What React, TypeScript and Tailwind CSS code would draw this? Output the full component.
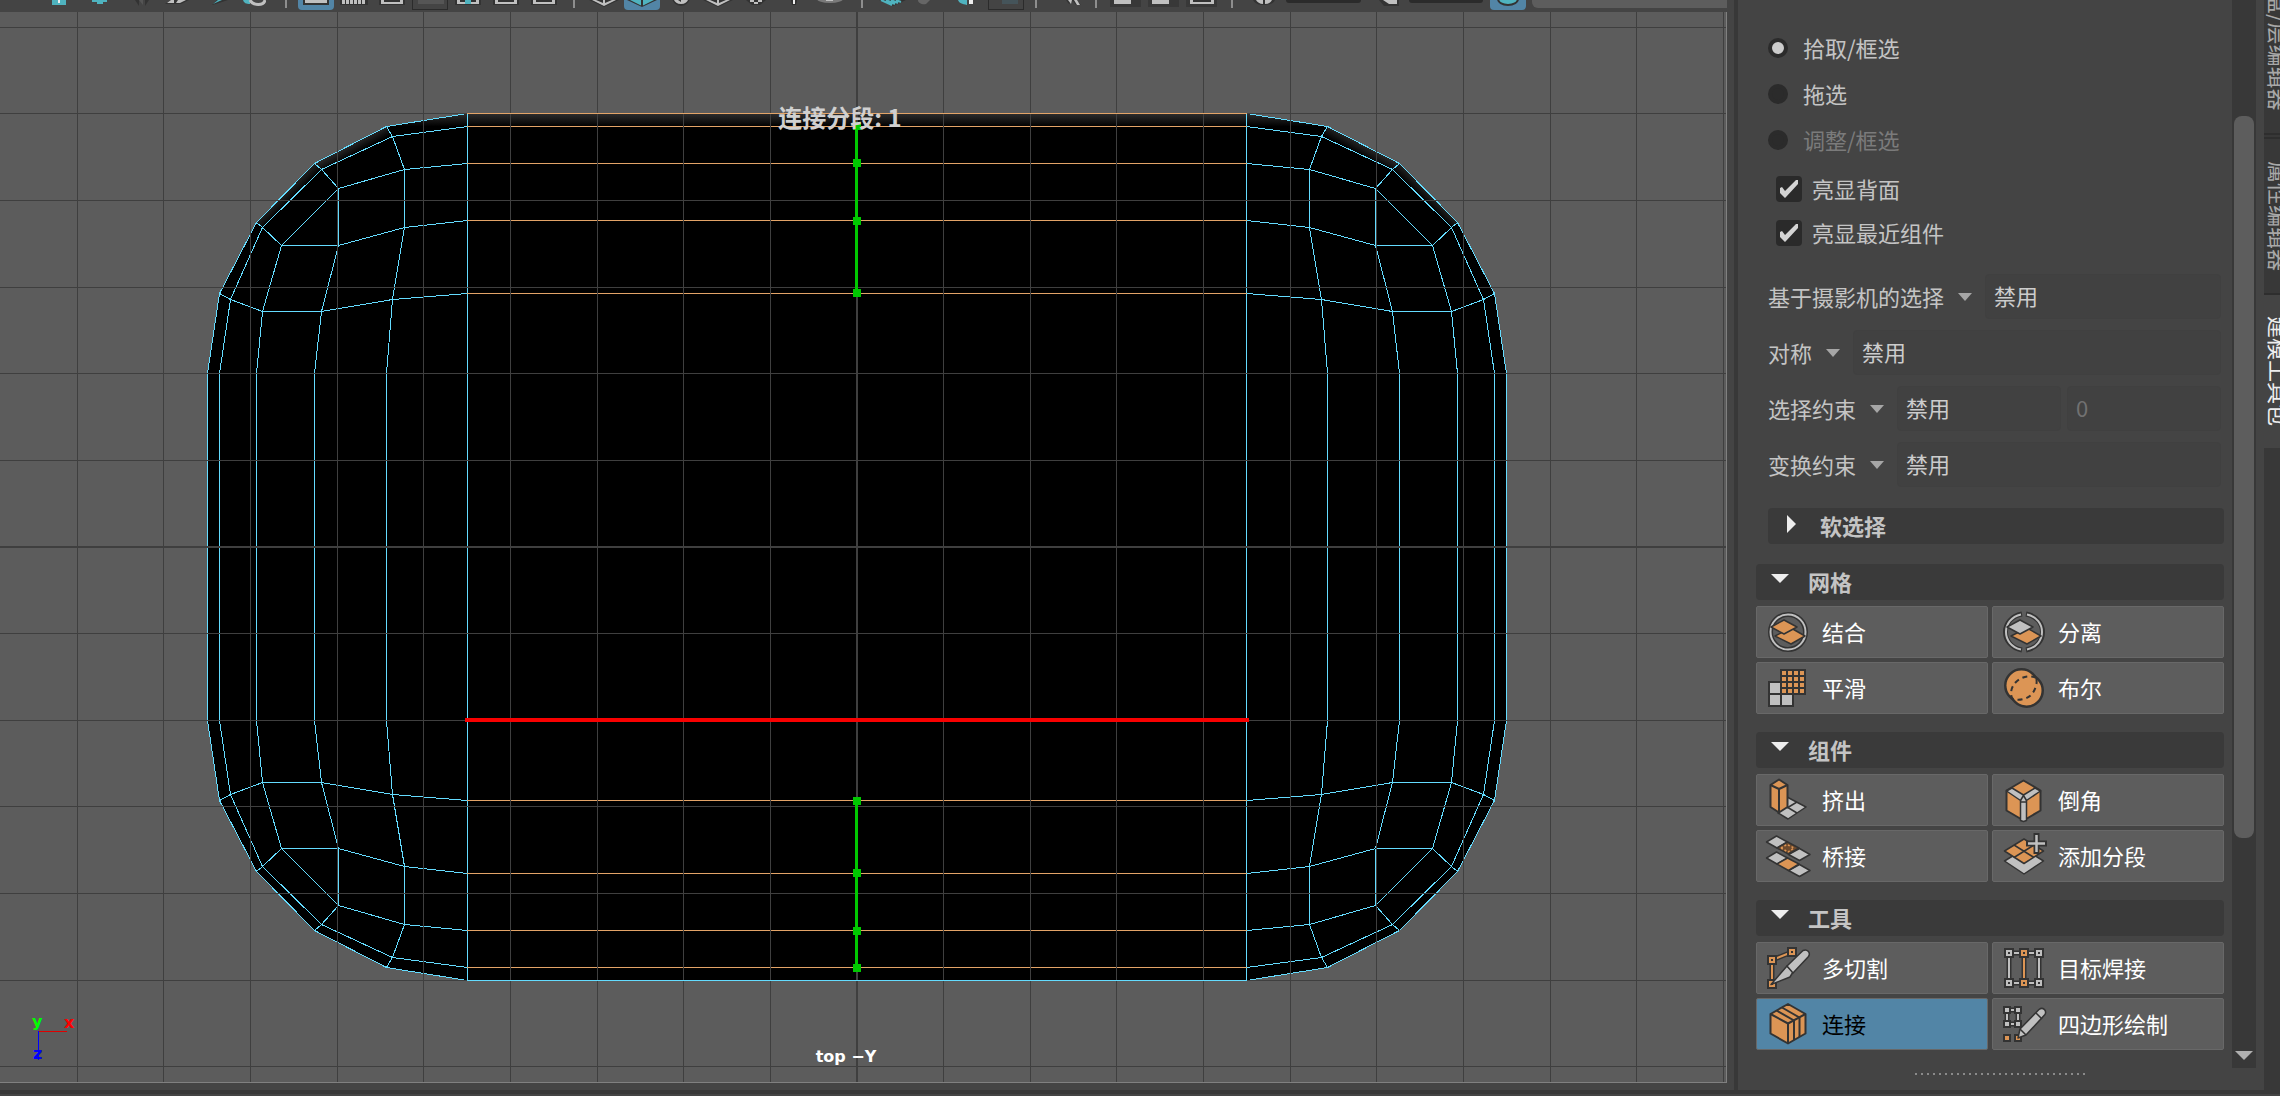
import type { ReactNode } from 'react';

type Point = [number, number];

const DARK = '#333333';
const ORANGE = '#dc9555';
const SILVER = '#c0c0c0';
const TEAL = '#4fb3bf';
const CYAN = '#64dcff';
const EDGE = '#e3a468';

/* ---------- mesh ---------- */

// One quarter of the rounded box, the other three are mirrored from it
const SPAN: Point = [1713, 1093];

const rings: Point[][] = [
  [[857, 113], [467, 113], [386, 126], [314, 163], [256, 222], [219, 293], [207, 373], [207, 547]],
  [[467, 126], [392, 136], [321, 169], [262, 227], [230, 299], [219, 373], [219, 547]],
  [[467, 163], [404, 169], [338, 188], [281, 245], [262, 311], [256, 373], [256, 547]],
  [[467, 220], [404, 227], [338, 245], [321, 311], [314, 373], [314, 547]],
  [[467, 293], [392, 299], [386, 373], [386, 547]],
];

const spokes: Point[][] = [
  [[467, 113], [467, 547]],
  [[386, 126], [392, 136], [404, 169], [404, 227], [392, 299]],
  [[314, 163], [321, 169], [338, 188], [338, 245]],
  [[256, 222], [262, 227], [281, 245], [338, 245]],
  [[219, 293], [230, 299], [262, 311], [321, 311], [392, 299]],
];

const mirrors: Point[] = [[1, 1], [-1, 1], [1, -1], [-1, -1]];

const reflect = (points: Point[], [sx, sy]: Point) =>
  points
    .map(([x, y]) => [sx === 1 ? x : SPAN[0] - x, sy === 1 ? y : SPAN[1] - y].join(','))
    .join(' ');

const gridX = [77, 163, 250, 337, 423, 510, 597, 683, 770, 943, 1030, 1116, 1203, 1290, 1376, 1463, 1550, 1636, 1723];
const gridY = [27, 113, 200, 287, 373, 460, 633, 720, 806, 893, 980, 1066];
const edgesY = [126, 163, 220, 293, 800, 873, 930, 967];
const nodesY = [126, 163, 221, 293, 801, 873, 931, 968];

function Viewport() {
  return (
    <svg
      viewBox="0 12 1726 1070"
      preserveAspectRatio="xMidYMid slice"
      className="block h-full w-full"
      shapeRendering="crispEdges"
      role="img"
      aria-label="top -Y"
    >
      <defs>
        <linearGradient id="rim" gradientUnits="userSpaceOnUse" x1="0" y1="113" x2="0" y2="126">
          <stop offset="0" stopColor="#2e2e2e" />
          <stop offset="1" stopColor="#000" />
        </linearGradient>
        <linearGradient id="rimSlope" gradientUnits="userSpaceOnUse" x1="347" y1="144" x2="353" y2="155">
          <stop offset="0" stopColor="#2e2e2e" />
          <stop offset="1" stopColor="#000" />
        </linearGradient>
        <linearGradient id="rimCorner" gradientUnits="userSpaceOnUse" x1="285" y1="192" x2="292" y2="199">
          <stop offset="0" stopColor="#222" />
          <stop offset="1" stopColor="#000" />
        </linearGradient>
      </defs>

      {/* half a pixel keeps the one pixel strokes sharp */}
      <g transform="translate(0.5 0.5)">
        {mirrors.map((m) => (
          <polygon key={m.join()} points={reflect([...rings[0], [857, 547]], m)} fill="#000" />
        ))}
        {[undefined, 'translate(1713 0) scale(-1 1)'].map((transform) => (
          <g key={transform ?? 'left'} transform={transform}>
            <polygon points="857,113 467,113 386,126 392,136 467,126 857,126" fill="url(#rim)" />
            <polygon points="386,126 314,163 321,169 392,136" fill="url(#rimSlope)" />
            <polygon points="314,163 256,222 262,227 321,169" fill="url(#rimCorner)" />
          </g>
        ))}
        <g fill="none" stroke={CYAN} strokeWidth="1">
          {mirrors.map((m) =>
            [...rings, ...spokes].map((line, i) => (
              <polyline key={`${m.join()}-${i}`} points={reflect(line, m)} />
            )),
          )}
        </g>
      </g>
      {edgesY.map((y) => (
        <rect key={y} x="467" y={y} width="780" height="1" fill={EDGE} />
      ))}

      <g fill="#3f3f3f">
        {gridX.map((x) => (
          <rect key={x} x={x} y="12" width="1" height="1070" />
        ))}
        {gridY.map((y) => (
          <rect key={y} x="0" y={y} width="1726" height="1" />
        ))}
        <rect x="856" y="12" width="2" height="1070" />
        <rect x="0" y="546" width="1726" height="2" />
      </g>
      <rect x="467" y="113" width="780" height="1" fill={EDGE} />
      <rect x="467" y="980" width="780" height="1" fill={CYAN} />

      {/* connect preview */}
      <rect x="465" y="718" width="784" height="4" fill="#f80000" />
      <g fill="#00c800">
        <rect x="855" y="126" width="3" height="167" />
        <rect x="855" y="801" width="3" height="167" />
        {nodesY.map((y) => (
          <rect key={y} x="853" y={y - 4} width="8" height="8" />
        ))}
      </g>

      <text
        x="840"
        y="127"
        textAnchor="middle"
        fill="#d0d0d0"
        className="font-['Noto_Sans_CJK_SC',sans-serif] text-[24px] font-bold"
      >
        连接分段: 1
      </text>
      <text
        x="846"
        y="1062"
        textAnchor="middle"
        fill="#ffffff"
        className="font-['DejaVu_Sans',sans-serif] text-[16px] font-bold"
      >
        top −Y
      </text>

      {/* axis gizmo */}
      <g className="font-['DejaVu_Sans',sans-serif] text-[16px] font-bold">
        <rect x="39" y="1031" width="28" height="1" fill="#e00000" />
        <rect x="38" y="1031" width="1" height="29" fill="#0000ff" />
        <text x="32" y="1027" fill="#00ff00">y</text>
        <text x="64" y="1028" fill="#ff0000">x</text>
        <text x="33" y="1059" fill="#0000ff">z</text>
      </g>
    </svg>
  );
}

/* ---------- toolbar ---------- */

function Slot({ label, active, framed, children }: { label: string; active?: boolean; framed?: boolean; children: ReactNode }) {
  return (
    <button
      type="button"
      aria-label={label}
      className={`h-[10px] w-9 flex-none overflow-hidden ${active ? 'rounded-b-sm bg-[#5285a6]' : ''} ${
        framed ? 'border border-t-0 border-[#2b2b2b]' : ''
      }`}
    >
      <svg viewBox="0 0 36 10" className="mx-auto block h-[10px] w-9">{children}</svg>
    </button>
  );
}

const Group = ({ children }: { children: ReactNode }) => <div className="flex flex-none gap-0.5">{children}</div>;

const Divider = () => <div className="mx-[11px] h-2 w-0.5 flex-none bg-[#8e8e8e]" />;

const Gate = ({ children }: { children?: ReactNode }) => (
  <>
    <path d="M5 0h26v5H5z" fill={DARK} />
    <path d="M7 0h22v4H7z" fill={SILVER} />
    <path d="M10 0h16v2H10z" fill={DARK} />
    {children}
  </>
);

const CubeTip = ({ fill }: { fill: string }) => (
  <>
    <path d="M3 0l15 7 15-7z" fill={DARK} />
    <path d="M6 0l12 6L30 0z" fill={fill} />
    {fill === SILVER && <path d="M10 0l7 3V0zM26 0l-7 3V0z" fill={DARK} />}
    {fill !== SILVER && <path d="M17 0h2v6h-2z" fill={DARK} />}
  </>
);

function Toolbar() {
  return (
    <div className="flex h-3 items-start overflow-hidden bg-[#444444] pl-10">
      <Group>
        <Slot label="选择摄影机">
          <path d="M12 0h14v5H12z" fill={TEAL} />
          <path d="M18 0h2v3h-2z" fill="#eee" />
        </Slot>
        <Slot label="锁定摄影机"><path d="M14 0h15v2h-4v2h-6V2h-5z" fill={TEAL} /></Slot>
        <Slot label="摄影机属性">
          <path d="M19 0h4v6zM33 0h-4v6z" fill={DARK} />
          <path d="M23 0l4 5V0z" fill="#555" />
        </Slot>
        <Slot label="书签">
          <path d="M11 4l6-4h18l-8 4z" fill={DARK} />
          <path d="M13 3l4-3h3v3zM22 3h4l6-3h-8z" fill={SILVER} />
        </Slot>
        <Slot label="图像平面">
          <path d="M20 5l5-5h11l-9 3z" fill={DARK} />
          <path d="M21 4l5-4h4z" fill={TEAL} />
        </Slot>
        <Slot label="平移/缩放">
          <path d="M13 0h7v4c-4 0-6-1-7-4z" fill={TEAL} />
          <path d="M20 0c3 6 14 6 15 0" fill="none" stroke={SILVER} strokeWidth="3" />
        </Slot>
      </Group>
      <div className="w-2 flex-none" />
      <Divider />
      <Group>
        <Slot label="栅格" active>
          <path d="M5 0h26v5H5z" fill={DARK} />
          <path d="M7 0h22v3H7z" fill={SILVER} />
        </Slot>
        <Slot label="胶片门">
          <path d="M4 0h28v5H4z" fill={DARK} />
          <path d="M6 0h3v4H6zM10 0h3v4h-3zM14 0h3v4h-3zM18 0h3v4h-3zM22 0h3v4h-3zM26 0h3v4h-3z" fill={SILVER} />
        </Slot>
        <Slot label="分辨率门"><Gate /></Slot>
        <Slot label="门遮罩" framed><path d="M5 0h26v4H5z" fill="#555" /></Slot>
        <Slot label="区域图"><Gate><path d="M15 0h6v4h-6z" fill={TEAL} /></Gate></Slot>
        <Slot label="安全动作"><Gate /></Slot>
        <Slot label="安全标题"><Gate /></Slot>
      </Group>
      <Divider />
      <Group>
        <Slot label="线框"><CubeTip fill={SILVER} /></Slot>
        <Slot label="着色" active><CubeTip fill={TEAL} /></Slot>
        <Slot label="默认材质">
          <circle cx="19" cy="-3" r="9" fill={DARK} />
          <path d="M12 0c1 2 3 4 7 4s6-2 7-4h-7v2l-3-2z" fill={SILVER} />
        </Slot>
        <Slot label="着色线框"><CubeTip fill={SILVER} /></Slot>
        <Slot label="带纹理">
          <path d="M8 0h20l-6 5h-8z" fill={DARK} />
          <path d="M12 0h4v2h-4zM16 2h4v2h-4zM20 0h4v2h-4z" fill={SILVER} />
        </Slot>
        <Slot label="灯光"><path d="M15 0h6l-1 5h-4z" fill="#2f2f2f" /><path d="M17 0h2v4h-2z" fill="#eee" /></Slot>
        <Slot label="阴影"><ellipse cx="16" cy="-1" rx="13" ry="4" fill="#7a7a7a" /><path d="M12 0h7v1h-7z" fill={SILVER} /></Slot>
      </Group>
      <Divider />
      <Group>
        <Slot label="隔离选择">
          <path d="M5 0h27l-13 6z" fill={DARK} />
          <path d="M7 0l11 5M12 0l9 4M17 0l7 3M22 0l5 2" stroke={TEAL} strokeWidth="2" />
        </Slot>
        <Slot label="运动模糊"><path d="M6 0h12l-4 4C10 5 6 3 6 0z" fill="#666" /></Slot>
        <Slot label="多采样">
          <path d="M8 0h9v5C12 4 9 3 8 0z" fill={TEAL} />
          <path d="M19 0h4v4h-4z" fill="#eee" />
        </Slot>
        <Slot label="景深" framed><path d="M13 0h16v4H13z" fill="#45545a" /></Slot>
      </Group>
      <Divider />
      <Slot label="X 射线">
        <path d="M18 0h9l6 5h-5l-3-4-4 3z" fill={DARK} />
        <path d="M20 0l3 4 1-4zM26 0l3 5h3l-3-5z" fill={SILVER} />
      </Slot>
      <Divider />
      <Group>
        <Slot label="视图一"><path d="M2 0h31v7H2z" fill="#383838" /><path d="M6 0h17v4H6z" fill={SILVER} /></Slot>
        <Slot label="视图二"><path d="M2 0h31v7H2z" fill="#383838" /><path d="M6 0h17v4H6z" fill={SILVER} /></Slot>
        <Slot label="视图三">
          <path d="M2 0h31v7H2z" fill="#383838" />
          <path d="M6 0h24v4H6z" fill={SILVER} />
          <path d="M9 0h18v2H9z" fill={DARK} />
        </Slot>
      </Group>
      <Divider />
      <Slot label="曝光">
        <path d="M9 0h22c-2 4-6 5-11 5S11 4 9 0z" fill={DARK} />
        <path d="M12 0h7v4c-3 0-6-2-7-4zM21 0h7c-1 2-3 4-7 4z" fill={SILVER} />
      </Slot>
      <div className="mr-2.5 ml-1.5 h-[3px] w-[75px] flex-none rounded-b-sm bg-[#2b2b2b]" />
      <Slot label="伽马">
        <path d="M8 0h20v6H13z" fill={DARK} />
        <path d="M12 0h14v4h-8z" fill={SILVER} />
      </Slot>
      <div className="mr-[7px] ml-0.5 h-[3px] w-[74px] flex-none rounded-b-sm bg-[#2b2b2b]" />
      <Slot label="视图变换" active>
        <ellipse cx="18" cy="-1" rx="11" ry="7" fill={DARK} />
        <ellipse cx="18" cy="-1" rx="9" ry="5" fill={TEAL} />
      </Slot>
      <div className="ml-1.5 h-2 flex-1 rounded-bl-md bg-[#5d5d5d]" />
    </div>
  );
}

/* ---------- tool icons ---------- */

function Icon({ children }: { children: ReactNode }) {
  return (
    <svg viewBox="0 0 46 46" className="size-[46px] flex-none" stroke={DARK} strokeWidth="1.500" strokeLinejoin="round">
      {children}
    </svg>
  );
}

const Node = ({ x, y, color = SILVER }: { x: number; y: number; color?: string }) => (
  <g stroke="none">
    <rect x={x - 5} y={y - 5} width="10" height="10" fill={DARK} />
    <rect x={x - 3} y={y - 3} width="6" height="6" fill={color} />
    <rect x={x - 1} y={y - 1} width="2" height="2" fill={DARK} />
  </g>
);

const combineIcon = (
  <Icon>
    <circle cx="23" cy="23" r="17.500" fill="none" strokeWidth="5" />
    <circle cx="23" cy="23" r="17.500" fill="none" stroke={SILVER} strokeWidth="2" />
    <path d="M10 27l16-8 14 8-14 8z" fill={ORANGE} />
    <path d="M6 18l13-7 13 7-13 7z" fill={ORANGE} />
  </Icon>
);

const separateIcon = (
  <Icon>
    <path d="M21 5C-1 9-1 37 21 41M25 5c22 4 22 32 0 36" fill="none" strokeWidth="5" />
    <path d="M20 5.500C0 10 0 36 20 40.500M26 5.500c20 4.500 20 30.500 0 35" fill="none" stroke={SILVER} strokeWidth="2" />
    <path d="M10 27l16-8 14 8-14 8z" fill={ORANGE} />
    <path d="M6 18l13-7 13 7-13 7z" fill={SILVER} />
  </Icon>
);

const smoothIcon = (
  <Icon>
    <g stroke="none">
      <path d="M3 16h13v12h13v14H3z" fill={DARK} />
      <path d="M5 18h10v10H5zM5 30h10v10H5zM17 30h10v10H17z" fill={SILVER} />
      <path d="M15 4h26v26H15z" fill={DARK} />
      {[6, 12, 18, 24].map((y) =>
        [17, 23, 29, 35].map((x) => <rect key={`${x}-${y}`} x={x} y={y} width="4" height="4" fill={ORANGE} />),
      )}
    </g>
  </Icon>
);

const booleanIcon = (
  <Icon>
    <circle cx="20.500" cy="20.500" r="16" fill={ORANGE} strokeWidth="3" />
    <circle cx="25.500" cy="25.500" r="16" fill={ORANGE} strokeWidth="3" />
    <circle cx="20.500" cy="20.500" r="15" fill={ORANGE} stroke="none" />
    <circle cx="25.500" cy="25.500" r="15" fill={ORANGE} stroke="none" />
    <path d="M35 13c-5-3-14-2-20 4S9 31 12 34c6 2 14 0 18-4s7-12 5-17z" fill="none" strokeDasharray="5 4" strokeWidth="2" />
  </Icon>
);

const extrudeIcon = (
  <Icon>
    <path d="M22 20l19 10-18 12-10-6z" fill={SILVER} />
    <path d="M22 30l10 6M22 31l10-6" fill="none" />
    <path d="M5.500 8L14 2.500 22.500 8v22L14 35.500 5.500 30z" fill={ORANGE} strokeWidth="2" />
    <path d="M5.500 8l8.500 4 8.500-4M14 12v23" fill="none" strokeWidth="2" />
  </Icon>
);

const bevelIcon = (
  <Icon>
    <path d="M22.500 3.500l17 10v20l-17 10-17-10v-20z" fill={ORANGE} strokeWidth="2" />
    <path d="M11 11l11.500 7L34 11l5.500 3-14 9.500v20l-3 1-3-1v-20l-14-9.500z" fill={SILVER} />
    <path d="M19.500 23.500l3-5 3 5M19.500 25h6" fill="none" />
  </Icon>
);

const bridgeIcon = (
  <Icon>
    <path d="M1.500 9l10-6 11 6-10.500 6zM23.500 21.500l11-6 10.500 6-10.500 6z" fill={SILVER} />
    <path d="M12 15l10.500-6 11.500 6-10.500 6z" fill="#6e4a2c" />
    <path d="M16 15l6-3.500 7 3.500-6 4z" fill="none" stroke={ORANGE} strokeDasharray="2 2" />
    <path d="M1.500 25l10-6 11 6-10.500 6zM23.500 37.500l11-6 10.500 6-10.500 6z" fill={SILVER} />
    <path d="M12 31l10.500-6 11.500 6-10.500 6.500z" fill={ORANGE} />
  </Icon>
);

const divisionsIcon = (
  <Icon>
    <path d="M3.500 28L23 16l19.500 12L23 41z" fill={SILVER} />
    <path d="M3.500 18L23 6l19.500 12L23 30.500z" fill={ORANGE} />
    <path d="M13 12l20 12.500M33 12L13 24.500" fill="none" />
    <path d="M35.500 0v21M25 10.500h21" strokeWidth="6" />
    <path d="M35.500 2v17M27 10.500h17" stroke={SILVER} strokeWidth="2.500" />
  </Icon>
);

const cutIcon = (
  <Icon>
    <path d="M7 39V15l20-8" fill="none" strokeWidth="5" />
    <path d="M7 39V15l20-8" fill="none" stroke={ORANGE} strokeWidth="2" />
    <Node x={27} y={7} color={ORANGE} />
    <Node x={7} y={15} color={ORANGE} />
    <Node x={7} y={39} color={ORANGE} />
    <path d="M6 39.500L22 21l6 6-3 5z" fill={SILVER} />
    <path d="M22 21L38 5.500c4-2 8 2 5.500 6L28 28z" fill={SILVER} />
  </Icon>
);

const weldIcon = (
  <Icon>
    <path d="M8 8h30v30H8zM23 8v30" fill="none" strokeWidth="5" />
    <path d="M8 8h30v30H8z" fill="none" stroke={SILVER} strokeWidth="2" />
    <path d="M23 8v30" fill="none" stroke={ORANGE} strokeWidth="2" />
    {[8, 38].map((y) => (
      <g key={y}>
        <Node x={8} y={y} />
        <Node x={23} y={y} color={ORANGE} />
        <Node x={38} y={y} />
      </g>
    ))}
  </Icon>
);

const connectIcon = (
  <Icon>
    <path d="M23 3l17.500 10v19.500L23 42.500 5.500 32.500V13z" fill={ORANGE} strokeWidth="2" />
    <path d="M5.500 13L23 22.500 40.500 13M23 22.500v20" fill="none" strokeWidth="2" />
    <path d="M11.500 9.500l17.500 10V39M17 6.500l17.500 10V36" fill="none" strokeWidth="2" />
  </Icon>
);

const quadDrawIcon = (
  <Icon>
    <path d="M6 9h11v14H6z" fill="none" strokeWidth="5" />
    <path d="M6 9h11v14H6z" fill="none" stroke={SILVER} strokeWidth="2" />
    <g stroke="none">
      {[[6, 9], [17, 9], [6, 23], [17, 23], [6, 37], [17, 37]].map(([x, y]) => (
        <g key={`${x}-${y}`}>
          <rect x={x - 4} y={y - 4} width="8" height="8" fill={DARK} />
          <rect x={x - 2} y={y - 2} width="4" height="4" fill={y === 37 ? ORANGE : SILVER} />
        </g>
      ))}
    </g>
    <path d="M17 37l2-9L38 8.500c4-3 8 1 6 5L25 34z" fill={SILVER} />
    <path d="M19 28l6 6M35 12l6 6" fill="none" />
  </Icon>
);

/* ---------- modeling toolkit ---------- */

const pickModes = [
  { label: '拾取/框选', checked: true },
  { label: '拖选' },
  { label: '调整/框选', disabled: true },
];

const highlights = ['亮显背面', '亮显最近组件'];

const constraints = [
  { id: 'camera', label: '基于摄影机的选择' },
  { id: 'symmetry', label: '对称' },
  { id: 'selection', label: '选择约束', amount: '0' },
  { id: 'transform', label: '变换约束' },
];

const sections = [
  {
    title: '网格',
    tools: [
      { name: '结合', icon: combineIcon },
      { name: '分离', icon: separateIcon },
      { name: '平滑', icon: smoothIcon },
      { name: '布尔', icon: booleanIcon },
    ],
  },
  {
    title: '组件',
    tools: [
      { name: '挤出', icon: extrudeIcon },
      { name: '倒角', icon: bevelIcon },
      { name: '桥接', icon: bridgeIcon },
      { name: '添加分段', icon: divisionsIcon },
    ],
  },
  {
    title: '工具',
    tools: [
      { name: '多切割', icon: cutIcon },
      { name: '目标焊接', icon: weldIcon },
      { name: '连接', icon: connectIcon, active: true },
      { name: '四边形绘制', icon: quadDrawIcon },
    ],
  },
];

function PickModes() {
  return (
    <div className="pl-[30px]">
      {pickModes.map(({ label, checked, disabled }) => (
        <label
          key={label}
          className={`flex h-[46px] items-center gap-[15px] ${disabled ? 'text-[#7b7b7b]' : ''}`}
        >
          <input
            type="radio"
            name="pick-mode"
            defaultChecked={checked}
            disabled={disabled}
            className="size-5 appearance-none rounded-full border-4 border-[#2b2b2b] bg-[#2b2b2b] checked:bg-[#cccccc]"
          />
          <span className="pb-0.5">{label}</span>
        </label>
      ))}
    </div>
  );
}

function Highlights() {
  return (
    <div className="mt-1 pl-[38px]">
      {highlights.map((label) => (
        <label key={label} className="flex h-11 items-center gap-2.5">
          <span className="grid size-[26px]">
            <input
              type="checkbox"
              defaultChecked
              className="peer col-start-1 row-start-1 appearance-none rounded-sm bg-[#2a2a2a]"
            />
            <svg viewBox="0 0 26 26" className="pointer-events-none col-start-1 row-start-1 hidden peer-checked:block">
              <path d="M4 12l2-1 3 4L20 4l2 0v4L10 21l-1 1L4 17z" fill="#d4d4d4" />
            </svg>
          </span>
          <span className="pb-0.5">{label}</span>
        </label>
      ))}
    </div>
  );
}

function Constraints() {
  return (
    <div className="mt-[19px] flex flex-col gap-[11px] pr-[3px] pl-[30px]">
      {constraints.map(({ id, label, amount }) => (
        <div key={id} className="flex h-[45px] items-center">
          <label htmlFor={id} className="flex-none pb-0.5">{label}</label>
          <button type="button" aria-label={`${label}菜单`} className="mr-[13px] ml-3.5 flex-none">
            <svg viewBox="0 0 14 8" className="block h-2 w-3.5"><path d="M0 0h14L7 8z" fill="#a6a6a6" /></svg>
          </button>
          <input
            id={id}
            readOnly
            value="禁用"
            className="h-full w-0 flex-1 rounded-sm border border-[#404040] bg-[#414141] px-2 pb-1 text-[#cccccc] outline-none"
          />
          {amount && (
            <input
              disabled
              value={amount}
              aria-label={`${label}值`}
              className="ml-1.5 h-full w-[154px] rounded-sm border border-[#404040] bg-[#414141] px-2 pb-1 text-[#717171]"
            />
          )}
        </div>
      ))}
    </div>
  );
}

function Section({ title, tools }: (typeof sections)[number]) {
  return (
    <section className="mb-[18px]">
      <h2>
        <button type="button" className="flex h-9 w-full items-center rounded bg-[#3a3a3a] pl-[15px] font-bold">
          <svg viewBox="0 0 18 10" className="mr-[19px] mb-1.5 h-2.5 w-[18px]"><path d="M0 0h18L9 9z" fill="#eeeeee" /></svg>
          <span className="pb-[3px]">{title}</span>
        </button>
      </h2>
      <div className="mt-1.5 grid grid-cols-2 gap-1">
        {tools.map((tool) => {
          const active = 'active' in tool;
          return (
            <button
              key={tool.name}
              type="button"
              aria-pressed={active}
              className={`flex h-[52px] items-center gap-[11px] rounded-xs border border-[#686868] pl-2 ${
                active ? 'bg-[#5285a6] text-black' : 'bg-[#5d5d5d] text-white'
              }`}
            >
              {tool.icon}
              <span className="pb-[3px]">{tool.name}</span>
            </button>
          );
        })}
      </div>
    </section>
  );
}

function Scrollbar() {
  return (
    <div className="flex h-[1068px] w-6 flex-none flex-col items-center bg-[#383838] pt-[116px]">
      <div className="h-[722px] w-5 rounded-lg bg-[#5d5d5d]" />
      <div className="flex-1" />
      <button type="button" aria-label="向下滚动" className="mb-2">
        <svg viewBox="0 0 18 9" className="block h-[9px] w-[18px]"><path d="M0 0h18L9 9z" fill="#b0b0b0" /></svg>
      </button>
    </div>
  );
}

function Tabs() {
  const tab = 'flex w-4 flex-none flex-col items-start overflow-hidden pl-[5px]';
  const title = 'flex-none whitespace-nowrap [writing-mode:vertical-rl] [text-orientation:sideways]';
  return (
    <nav className="ml-2 flex w-4 flex-none flex-col overflow-hidden bg-[#383838] text-[22px] leading-[22px] text-[#a8a8a8]">
      <button type="button" className={`${tab} h-[135px] justify-end border-b-2 border-[#2e2e2e] pb-[22px]`}>
        <span className={title}>通道盒/层编辑器</span>
      </button>
      <button type="button" className={`${tab} mt-0.5 h-[158px] justify-center border-y-2 border-[#2e2e2e]`}>
        <span className={title}>属性编辑器</span>
      </button>
      <button type="button" className={`${tab} h-[153px] justify-center bg-[#444444] text-[#eeeeee]`}>
        <span className={title}>建模工具包</span>
      </button>
    </nav>
  );
}

export default function App() {
  return (
    <div className="flex h-screen flex-col overflow-hidden bg-[#444444] font-['Noto_Sans_CJK_SC',sans-serif] text-[22px] leading-8 text-[#c4c4c4]">
      <div className="flex min-h-0 flex-1">
        <main className="flex min-w-0 flex-1 flex-col border-r-4 border-[#383838] pr-[7px] pb-[7px]">
          <Toolbar />
          <div className="min-h-0 flex-1 border-r border-b border-[#808080] bg-[#5c5c5c]">
            <Viewport />
          </div>
        </main>

        <aside className="flex w-[542px] flex-none">
          <div className="min-w-0 flex-1 pt-[25px] pr-2">
            <PickModes />
            <Highlights />
            <Constraints />
            <div className="mt-[21px] mb-5 pl-[30px]">
              <button type="button" className="flex h-9 w-full items-center rounded bg-[#3a3a3a] pl-[19px] font-bold">
                <svg viewBox="0 0 9 18" className="mr-6 mb-1 h-[18px] w-[9px]"><path d="M0 0v18l9-9z" fill="#eeeeee" /></svg>
                <span className="pb-[3px]">软选择</span>
              </button>
            </div>
            <div className="pl-[18px]">
              {sections.map((section) => (
                <Section key={section.title} {...section} />
              ))}
            </div>
            <div className="mt-[23px] ml-[177px] h-0.5 w-[170px] bg-[repeating-linear-gradient(90deg,#8a8a8a_0_2px,transparent_2px_6px)]" />
          </div>
          <Scrollbar />
          <Tabs />
        </aside>
      </div>
      <div className="h-1 flex-none bg-[#383838]" />
      <div className="h-0.5 flex-none" />
    </div>
  );
}
